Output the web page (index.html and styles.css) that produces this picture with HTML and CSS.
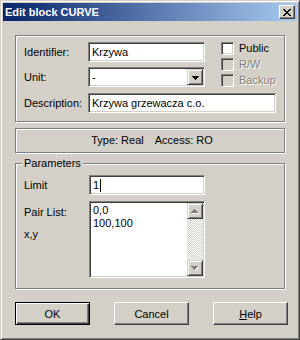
FILE: index.html
```html
<!DOCTYPE html>
<html lang="pl">
<head>
    <meta charset="UTF-8">
    <title>Edit block CURVE</title>
    <link rel="stylesheet" href="styles.css">
</head>
<body>
    <div class="window">
        <div class="titlebar">
            <span class="title">Edit block CURVE</span>
            <span class="close-btn">
                <svg width="8" height="7" viewBox="0 0 8 7"><path d="M0 0h2v1H0zM6 0h2v1H6zM1 1h2v1H1zM5 1h2v1H5zM2 2h4v1H2zM3 3h2v1H3zM2 4h4v1H2zM1 5h2v1H1zM5 5h2v1H5zM0 6h2v1H0zM6 6h2v1H6z" fill="#000"/></svg>
            </span>
        </div>

        <div class="content">
            <div class="group main-group">
                <div class="main-top">
                    <div class="fields">
                        <div class="row">
                            <span class="lbl">Identifier:</span>
                            <div class="edit w-short">Krzywa</div>
                        </div>
                        <div class="row">
                            <span class="lbl">Unit:</span>
                            <div class="edit combo w-short">
                                <span class="combo-text">-</span>
                                <span class="btn3d drop-btn">
                                    <svg width="7" height="4" viewBox="0 0 7 4"><path d="M0 0h7v1H0zM1 1h5v1H1zM2 2h3v1H2zM3 3h1v1H3z" fill="#000"/></svg>
                                </span>
                            </div>
                        </div>
                    </div>
                    <div class="checks">
                        <div class="check"><span class="box"></span><span>Public</span></div>
                        <div class="check disabled"><span class="box"></span><span>R/W</span></div>
                        <div class="check disabled"><span class="box"></span><span>Backup</span></div>
                    </div>
                </div>
                <div class="row desc-row">
                    <span class="lbl">Description:</span>
                    <div class="edit w-long">Krzywa grzewacza c.o.</div>
                </div>
            </div>

            <div class="group info">
                <span>Type: Real</span>
                <span>Access: RO</span>
            </div>

            <fieldset class="params">
                <legend>Parameters</legend>
                <div class="row">
                    <span class="lbl lbl-param">Limit</span>
                    <div class="edit w-param">1<span class="caret"></span></div>
                </div>
                <div class="row pair-row">
                    <div class="lbl lbl-param pair-labels">
                        <span>Pair List:</span>
                        <span>x,y</span>
                    </div>
                    <div class="edit listbox w-param">
                        <div class="list-items">
                            <div>0,0</div>
                            <div>100,100</div>
                        </div>
                        <div class="scrollbar">
                            <span class="btn3d scroll-btn">
                                <svg width="8" height="5" viewBox="0 0 8 5"><path d="M4 1h1v1H4zM3 2h3v1H3zM2 3h5v1H2zM1 4h7v1H1z" fill="#fff"/><path d="M3 0h1v1H3zM2 1h3v1H2zM1 2h5v1H1zM0 3h7v1H0z" fill="#808080"/></svg>
                            </span>
                            <span class="track"></span>
                            <span class="btn3d scroll-btn">
                                <svg width="8" height="5" viewBox="0 0 8 5"><path d="M1 1h7v1H1zM2 2h5v1H2zM3 3h3v1H3zM4 4h1v1H4z" fill="#fff"/><path d="M0 0h7v1H0zM1 1h5v1H1zM2 2h3v1H2zM3 3h1v1H3z" fill="#808080"/></svg>
                            </span>
                        </div>
                    </div>
                </div>
            </fieldset>

            <div class="buttons">
                <button class="btn default">OK</button>
                <button class="btn">Cancel</button>
                <button class="btn"><u>H</u>elp</button>
            </div>
        </div>
    </div>
</body>
</html>
```

FILE: styles.css
```css
* {
    box-sizing: border-box;
}

body {
    margin: 0;
    font-family: "Liberation Sans", Arial, sans-serif;
    font-size: 11px;
    line-height: 13px;
    color: #000;
    background-color: #d4d0c8;
}

.window {
    width: 300px;
    height: 340px;
    padding: 2px;
    background-color: #d4d0c8;
    border: 1px solid;
    border-color: #d4d0c8 #404040 #404040 #d4d0c8;
    box-shadow: inset 1px 1px 0 #fff, inset -1px -1px 0 #808080;
}

.titlebar {
    height: 18px;
    display: flex;
    align-items: center;
    justify-content: space-between;
    padding: 0 2px 0 2px;
    background: linear-gradient(to right, #0a246a, #a6caf0);
    color: #fff;
    font-weight: bold;
}

.close-btn {
    width: 16px;
    height: 14px;
    display: flex;
    align-items: center;
    justify-content: center;
    background-color: #d4d0c8;
    border: 1px solid;
    border-color: #fff #404040 #404040 #fff;
    box-shadow: inset -1px -1px 0 #808080;
}

.content {
    padding: 14px 12px 0 12px;
}

/* etched frames */
.group {
    width: 270px;
    border: 1px solid #808080;
    box-shadow: inset 1px 1px 0 #fff, 1px 1px 0 #fff;
}

.main-group {
    padding: 6px 8px 8px 8px;
}

.main-top {
    display: flex;
}

.fields {
    display: flex;
    flex-direction: column;
    gap: 5px;
}

.row {
    display: flex;
    align-items: center;
}

.lbl {
    width: 64px;
    flex: none;
}

.lbl-param {
    width: 65px;
}

/* sunken edit fields */
.edit {
    height: 20px;
    padding: 1px 1px 1px 3px;
    display: flex;
    align-items: center;
    background-color: #fff;
    border: 1px solid;
    border-color: #808080 #fff #fff #808080;
    box-shadow: inset 1px 1px 0 #404040, inset -1px -1px 0 #d4d0c8;
    white-space: nowrap;
}

.w-short {
    width: 117px;
}

.w-long {
    width: 190px;
}

.w-param {
    width: 116px;
}

.combo {
    padding-right: 1px;
}

.combo-text {
    flex: 1;
}

.btn3d {
    display: flex;
    align-items: center;
    justify-content: center;
    background-color: #d4d0c8;
    border: 1px solid;
    border-color: #d4d0c8 #404040 #404040 #d4d0c8;
    box-shadow: inset 1px 1px 0 #fff, inset -1px -1px 0 #808080;
}

.drop-btn {
    width: 16px;
    height: 16px;
    padding-top: 1px;
}

.checks {
    display: flex;
    flex-direction: column;
    margin: -2px 0 0 16px;
}

.check {
    height: 16px;
    display: flex;
    align-items: center;
}

.box {
    width: 13px;
    height: 13px;
    margin-right: 5px;
    background-color: #fff;
    border: 1px solid;
    border-color: #808080 #fff #fff #808080;
    box-shadow: inset 1px 1px 0 #404040, inset -1px -1px 0 #d4d0c8;
}

.check.disabled {
    color: #808080;
    text-shadow: 1px 1px 0 #fff;
}

.check.disabled .box {
    background-color: #d4d0c8;
}

.desc-row {
    margin-top: 5px;
}

.info {
    height: 25px;
    margin-top: 6px;
    display: flex;
    align-items: center;
    justify-content: center;
    gap: 11px;
    padding-left: 4px;
}

.params {
    width: 270px;
    margin: 4px 0 0 0;
    padding: 5px 8px 10px 8px;
    border: 1px solid #808080;
    box-shadow: inset 1px 1px 0 #fff, 1px 1px 0 #fff;
}

.params legend {
    margin-left: -2px;
    padding: 0 2px;
    background-color: #d4d0c8;
}

.caret {
    width: 1px;
    height: 13px;
    margin-left: 1px;
    background-color: #000;
}

.pair-row {
    margin-top: 6px;
    align-items: flex-start;
}

.pair-labels {
    display: flex;
    flex-direction: column;
    gap: 9px;
    padding-top: 5px;
}

.listbox {
    height: 77px;
    padding: 1px;
    align-items: stretch;
}

.list-items {
    flex: 1;
    padding: 1px 0 0 2px;
}

.scrollbar {
    width: 16px;
    display: flex;
    flex-direction: column;
}

.scroll-btn {
    width: 16px;
    height: 16px;
    flex: none;
}

.track {
    flex: 1;
    background-image: repeating-conic-gradient(#d4d0c8 0 25%, #fff 0 50%);
    background-size: 2px 2px;
}

.buttons {
    width: 273px;
    margin-top: 13px;
    display: flex;
    justify-content: space-between;
}

.btn {
    width: 75px;
    height: 23px;
    padding: 0;
    font-family: inherit;
    font-size: 11px;
    color: #000;
    background-color: #d4d0c8;
    border: 1px solid;
    border-color: #fff #404040 #404040 #fff;
    box-shadow: inset -1px -1px 0 #808080;
}

.btn.default {
    border-color: #000;
    box-shadow: inset 1px 1px 0 #fff, inset -1px -1px 0 #404040, inset -2px -2px 0 #808080;
}
```
